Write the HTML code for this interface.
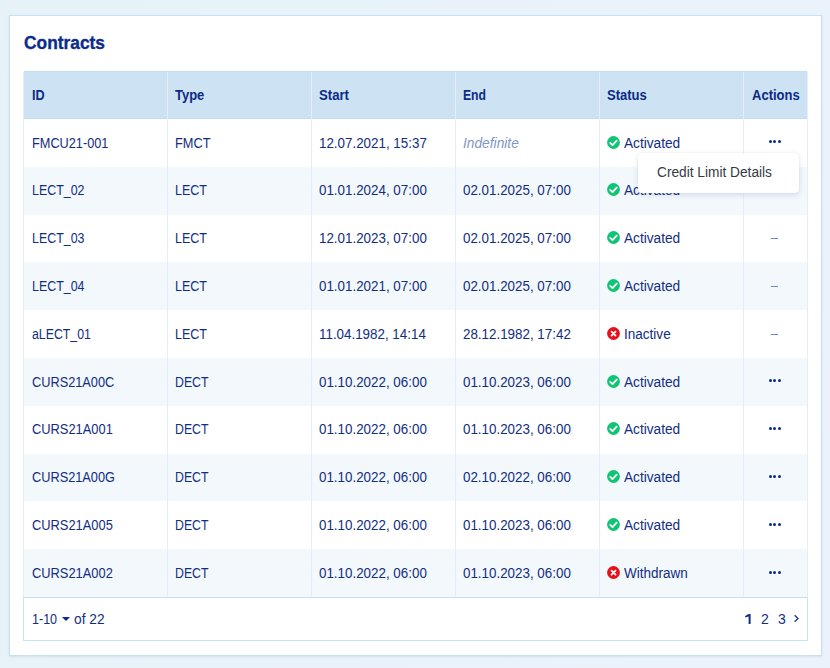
<!DOCTYPE html>
<html><head><meta charset="utf-8">
<style>
html,body{margin:0;padding:0;}
body{width:830px;height:668px;overflow:hidden;position:relative;background:linear-gradient(105deg,#e6f2f8 0%,#e9f2fa 50%,#ebf2fb 100%);font-family:"Liberation Sans",sans-serif;color:#122e80;}
div{position:absolute;}
.card{left:9px;top:15px;width:811px;height:639px;border:1px solid #c6e1f0;background:#fff;box-shadow:0 1px 2px rgba(120,150,180,.18);}
.t{left:24px;top:31px;font-size:18px;font-weight:bold;color:#0b2c8a;-webkit-text-stroke:0.35px #0b2c8a;line-height:22px;white-space:nowrap;}
.c{white-space:nowrap;font-size:14px;line-height:16px;}
.c span,.t span{display:inline-block;transform-origin:0 50%;}
.h{font-weight:bold;color:#0b2b86;}
.ind{font-style:italic;color:#7f97c2;}
.ic{width:13px;height:13px;border-radius:50%;}
.ok{background:#1fc471;}
.bad{background:#e3141c;}
.dot{width:3px;height:3px;border-radius:50%;background:#0a2a8a;}
.dash{width:7px;height:1px;background:#7088c8;}
.menu{left:638px;top:153px;width:161px;height:40px;background:#fff;border-radius:4px;box-shadow:0 2px 6px rgba(60,90,140,.16),0 0 1px rgba(60,90,140,.2);}
</style></head>
<body>
<div class="card"></div>

<div class="t" style="left:24px;top:32px;"><span style="transform:scaleX(0.964)">Contracts</span></div>
<div style="left:24px;top:71px;width:783px;height:48px;background:#cde3f3;"></div>
<div style="left:24px;top:71px;width:783px;height:1px;background:#c3deee;"></div>
<div style="left:24px;top:118px;width:783px;height:1px;background:#c5ddee;"></div>
<div style="left:24px;top:166.8px;width:783px;height:47.8px;background:#f3f8fc;"></div>
<div style="left:24px;top:262.4px;width:783px;height:47.8px;background:#f3f8fc;"></div>
<div style="left:24px;top:358.0px;width:783px;height:47.8px;background:#f3f8fc;"></div>
<div style="left:24px;top:453.6px;width:783px;height:47.8px;background:#f3f8fc;"></div>
<div style="left:24px;top:549.2px;width:783px;height:47.8px;background:#f3f8fc;"></div>
<div style="left:23px;top:72px;width:1px;height:525px;background:#e5edfa;"></div>
<div style="left:167px;top:72px;width:1px;height:525px;background:#e5edfa;"></div>
<div style="left:311px;top:72px;width:1px;height:525px;background:#e5edfa;"></div>
<div style="left:455px;top:72px;width:1px;height:525px;background:#e5edfa;"></div>
<div style="left:599px;top:72px;width:1px;height:525px;background:#e5edfa;"></div>
<div style="left:743px;top:72px;width:1px;height:525px;background:#e5edfa;"></div>
<div style="left:807px;top:72px;width:1px;height:525px;background:#e5edfa;"></div>
<div class="c h" style="left:32px;top:87px;"><span style="transform:scaleX(0.9)">ID</span></div>
<div class="c h" style="left:175px;top:87px;"><span style="transform:scaleX(0.925)">Type</span></div>
<div class="c h" style="left:319px;top:87px;"><span style="transform:scaleX(0.94)">Start</span></div>
<div class="c h" style="left:463px;top:87px;"><span style="transform:scaleX(0.87)">End</span></div>
<div class="c h" style="left:607px;top:87px;"><span style="transform:scaleX(0.93)">Status</span></div>
<div class="c h" style="left:752px;top:87px;"><span style="transform:scaleX(0.93)">Actions</span></div>
<div class="c" style="left:32px;top:135px;"><span style="transform:scaleX(0.9094)">FMCU21-001</span></div>
<div class="c" style="left:175px;top:135px;"><span style="transform:scaleX(0.9135)">FMCT</span></div>
<div class="c" style="left:319px;top:135px;"><span style="transform:scaleX(0.9551)">12.07.2021, 15:37</span></div>
<div class="c ind" style="left:463px;top:135px;"><span style="transform:scaleX(0.9825)">Indefinite</span></div>
<svg style="position:absolute;left:607px;top:136px" width="13" height="13" viewBox="0 0 13 13"><circle cx="6.5" cy="6.5" r="6.4" fill="#12c476"/><path d="M3.2 6.8 L5.5 9.1 L9.7 4.6" fill="none" stroke="#fff" stroke-width="1.7" stroke-linecap="round" stroke-linejoin="round"/></svg>
<div class="c" style="left:624px;top:135px;"><span style="transform:scaleX(0.9764)">Activated</span></div>
<div class="dot" style="left:768.9px;top:140.4px;"></div>
<div class="dot" style="left:773.4px;top:140.4px;"></div>
<div class="dot" style="left:778px;top:140.4px;"></div>
<div class="c" style="left:32px;top:182px;"><span style="transform:scaleX(0.8871)">LECT_02</span></div>
<div class="c" style="left:175px;top:182px;"><span style="transform:scaleX(0.8932)">LECT</span></div>
<div class="c" style="left:319px;top:182px;"><span style="transform:scaleX(0.9551)">01.01.2024, 07:00</span></div>
<div class="c" style="left:463px;top:182px;"><span style="transform:scaleX(0.9551)">02.01.2025, 07:00</span></div>
<svg style="position:absolute;left:607px;top:183px" width="13" height="13" viewBox="0 0 13 13"><circle cx="6.5" cy="6.5" r="6.4" fill="#12c476"/><path d="M3.2 6.8 L5.5 9.1 L9.7 4.6" fill="none" stroke="#fff" stroke-width="1.7" stroke-linecap="round" stroke-linejoin="round"/></svg>
<div class="c" style="left:624px;top:182px;"><span style="transform:scaleX(0.9764)">Activated</span></div>
<div class="c" style="left:32px;top:230px;"><span style="transform:scaleX(0.8871)">LECT_03</span></div>
<div class="c" style="left:175px;top:230px;"><span style="transform:scaleX(0.8932)">LECT</span></div>
<div class="c" style="left:319px;top:230px;"><span style="transform:scaleX(0.9551)">12.01.2023, 07:00</span></div>
<div class="c" style="left:463px;top:230px;"><span style="transform:scaleX(0.9551)">02.01.2025, 07:00</span></div>
<svg style="position:absolute;left:607px;top:231px" width="13" height="13" viewBox="0 0 13 13"><circle cx="6.5" cy="6.5" r="6.4" fill="#12c476"/><path d="M3.2 6.8 L5.5 9.1 L9.7 4.6" fill="none" stroke="#fff" stroke-width="1.7" stroke-linecap="round" stroke-linejoin="round"/></svg>
<div class="c" style="left:624px;top:230px;"><span style="transform:scaleX(0.9764)">Activated</span></div>
<div class="dash" style="left:771px;top:238.0px;"></div>
<div class="c" style="left:32px;top:278px;"><span style="transform:scaleX(0.8871)">LECT_04</span></div>
<div class="c" style="left:175px;top:278px;"><span style="transform:scaleX(0.8932)">LECT</span></div>
<div class="c" style="left:319px;top:278px;"><span style="transform:scaleX(0.9551)">01.01.2021, 07:00</span></div>
<div class="c" style="left:463px;top:278px;"><span style="transform:scaleX(0.9551)">02.01.2025, 07:00</span></div>
<svg style="position:absolute;left:607px;top:279px" width="13" height="13" viewBox="0 0 13 13"><circle cx="6.5" cy="6.5" r="6.4" fill="#12c476"/><path d="M3.2 6.8 L5.5 9.1 L9.7 4.6" fill="none" stroke="#fff" stroke-width="1.7" stroke-linecap="round" stroke-linejoin="round"/></svg>
<div class="c" style="left:624px;top:278px;"><span style="transform:scaleX(0.9764)">Activated</span></div>
<div class="dash" style="left:771px;top:286.0px;"></div>
<div class="c" style="left:32px;top:326px;"><span style="transform:scaleX(0.879)">aLECT_01</span></div>
<div class="c" style="left:175px;top:326px;"><span style="transform:scaleX(0.8932)">LECT</span></div>
<div class="c" style="left:319px;top:326px;"><span style="transform:scaleX(0.9551)">11.04.1982, 14:14</span></div>
<div class="c" style="left:463px;top:326px;"><span style="transform:scaleX(0.9551)">28.12.1982, 17:42</span></div>
<svg style="position:absolute;left:607px;top:327px" width="13" height="13" viewBox="0 0 13 13"><circle cx="6.5" cy="6.5" r="6.4" fill="#e6121b"/><path d="M4.6 4.7 L8.5 8.6 M8.5 4.7 L4.6 8.6" fill="none" stroke="#fff" stroke-width="1.8" stroke-linecap="round"/></svg>
<div class="c" style="left:624px;top:326px;"><span style="transform:scaleX(0.9673)">Inactive</span></div>
<div class="dash" style="left:771px;top:334.0px;"></div>
<div class="c" style="left:32px;top:374px;"><span style="transform:scaleX(0.9115)">CURS21A00C</span></div>
<div class="c" style="left:175px;top:374px;"><span style="transform:scaleX(0.878)">DECT</span></div>
<div class="c" style="left:319px;top:374px;"><span style="transform:scaleX(0.9551)">01.10.2022, 06:00</span></div>
<div class="c" style="left:463px;top:374px;"><span style="transform:scaleX(0.9551)">01.10.2023, 06:00</span></div>
<svg style="position:absolute;left:607px;top:375px" width="13" height="13" viewBox="0 0 13 13"><circle cx="6.5" cy="6.5" r="6.4" fill="#12c476"/><path d="M3.2 6.8 L5.5 9.1 L9.7 4.6" fill="none" stroke="#fff" stroke-width="1.7" stroke-linecap="round" stroke-linejoin="round"/></svg>
<div class="c" style="left:624px;top:374px;"><span style="transform:scaleX(0.9764)">Activated</span></div>
<div class="dot" style="left:768.9px;top:379.4px;"></div>
<div class="dot" style="left:773.4px;top:379.4px;"></div>
<div class="dot" style="left:778px;top:379.4px;"></div>
<div class="c" style="left:32px;top:421px;"><span style="transform:scaleX(0.9186)">CURS21A001</span></div>
<div class="c" style="left:175px;top:421px;"><span style="transform:scaleX(0.878)">DECT</span></div>
<div class="c" style="left:319px;top:421px;"><span style="transform:scaleX(0.9551)">01.10.2022, 06:00</span></div>
<div class="c" style="left:463px;top:421px;"><span style="transform:scaleX(0.9551)">01.10.2023, 06:00</span></div>
<svg style="position:absolute;left:607px;top:422px" width="13" height="13" viewBox="0 0 13 13"><circle cx="6.5" cy="6.5" r="6.4" fill="#12c476"/><path d="M3.2 6.8 L5.5 9.1 L9.7 4.6" fill="none" stroke="#fff" stroke-width="1.7" stroke-linecap="round" stroke-linejoin="round"/></svg>
<div class="c" style="left:624px;top:421px;"><span style="transform:scaleX(0.9764)">Activated</span></div>
<div class="dot" style="left:768.9px;top:427.2px;"></div>
<div class="dot" style="left:773.4px;top:427.2px;"></div>
<div class="dot" style="left:778px;top:427.2px;"></div>
<div class="c" style="left:32px;top:469px;"><span style="transform:scaleX(0.9115)">CURS21A00G</span></div>
<div class="c" style="left:175px;top:469px;"><span style="transform:scaleX(0.878)">DECT</span></div>
<div class="c" style="left:319px;top:469px;"><span style="transform:scaleX(0.9551)">01.10.2022, 06:00</span></div>
<div class="c" style="left:463px;top:469px;"><span style="transform:scaleX(0.9551)">02.10.2022, 06:00</span></div>
<svg style="position:absolute;left:607px;top:470px" width="13" height="13" viewBox="0 0 13 13"><circle cx="6.5" cy="6.5" r="6.4" fill="#12c476"/><path d="M3.2 6.8 L5.5 9.1 L9.7 4.6" fill="none" stroke="#fff" stroke-width="1.7" stroke-linecap="round" stroke-linejoin="round"/></svg>
<div class="c" style="left:624px;top:469px;"><span style="transform:scaleX(0.9764)">Activated</span></div>
<div class="dot" style="left:768.9px;top:475.0px;"></div>
<div class="dot" style="left:773.4px;top:475.0px;"></div>
<div class="dot" style="left:778px;top:475.0px;"></div>
<div class="c" style="left:32px;top:517px;"><span style="transform:scaleX(0.9186)">CURS21A005</span></div>
<div class="c" style="left:175px;top:517px;"><span style="transform:scaleX(0.878)">DECT</span></div>
<div class="c" style="left:319px;top:517px;"><span style="transform:scaleX(0.9551)">01.10.2022, 06:00</span></div>
<div class="c" style="left:463px;top:517px;"><span style="transform:scaleX(0.9551)">01.10.2023, 06:00</span></div>
<svg style="position:absolute;left:607px;top:518px" width="13" height="13" viewBox="0 0 13 13"><circle cx="6.5" cy="6.5" r="6.4" fill="#12c476"/><path d="M3.2 6.8 L5.5 9.1 L9.7 4.6" fill="none" stroke="#fff" stroke-width="1.7" stroke-linecap="round" stroke-linejoin="round"/></svg>
<div class="c" style="left:624px;top:517px;"><span style="transform:scaleX(0.9764)">Activated</span></div>
<div class="dot" style="left:768.9px;top:522.8px;"></div>
<div class="dot" style="left:773.4px;top:522.8px;"></div>
<div class="dot" style="left:778px;top:522.8px;"></div>
<div class="c" style="left:32px;top:565px;"><span style="transform:scaleX(0.9186)">CURS21A002</span></div>
<div class="c" style="left:175px;top:565px;"><span style="transform:scaleX(0.878)">DECT</span></div>
<div class="c" style="left:319px;top:565px;"><span style="transform:scaleX(0.9551)">01.10.2022, 06:00</span></div>
<div class="c" style="left:463px;top:565px;"><span style="transform:scaleX(0.9551)">01.10.2023, 06:00</span></div>
<svg style="position:absolute;left:607px;top:566px" width="13" height="13" viewBox="0 0 13 13"><circle cx="6.5" cy="6.5" r="6.4" fill="#e6121b"/><path d="M4.6 4.7 L8.5 8.6 M8.5 4.7 L4.6 8.6" fill="none" stroke="#fff" stroke-width="1.8" stroke-linecap="round"/></svg>
<div class="c" style="left:624px;top:565px;"><span style="transform:scaleX(0.9642)">Withdrawn</span></div>
<div class="dot" style="left:768.9px;top:570.6px;"></div>
<div class="dot" style="left:773.4px;top:570.6px;"></div>
<div class="dot" style="left:778px;top:570.6px;"></div>
<div style="left:23px;top:597px;width:783px;height:42px;border:1px solid #c6e1f0;background:#fff;"></div>
<div class="c" style="left:32px;top:611px;"><span style="transform:scaleX(0.8952)">1-10</span></div>
<div style="left:62px;top:617px;width:0;height:0;border-left:4px solid transparent;border-right:4px solid transparent;border-top:4px solid #0a2a8a;"></div>
<div class="c" style="left:74px;top:611px;"><span style="transform:scaleX(0.9805)">of 22</span></div>
<svg style="position:absolute;left:744px;top:613px" width="8" height="12" viewBox="0 0 8 12"><path d="M4.6 1 L6.6 1 L6.6 11 L4.6 11 L4.6 3.4 L1.2 4.6 L1.2 3 Z" fill="#122e80"/></svg>
<div class="c" style="left:761px;top:611px;">2</div>
<div class="c" style="left:778px;top:611px;">3</div>
<svg style="position:absolute;left:793px;top:614px" width="7" height="9" viewBox="0 0 7 9"><path d="M1.6 1.2 L5 4.5 L1.6 7.8" fill="none" stroke="#1a3590" stroke-width="1.3"/></svg>
<div class="menu"></div>
<div class="c" style="left:657px;top:164px;color:#333a45;"><span style="transform:scaleX(0.9785)">Credit Limit Details</span></div>
</body></html>
